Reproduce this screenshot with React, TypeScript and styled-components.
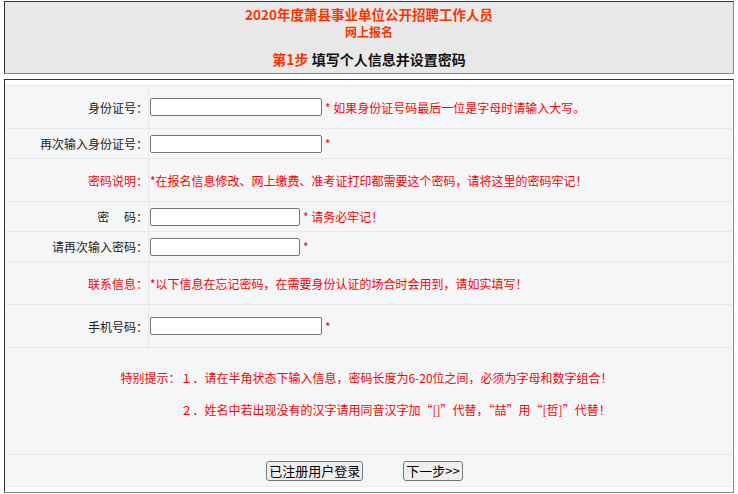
import styled, { createGlobalStyle } from "styled-components";

const GlobalStyle = createGlobalStyle`
  body {
    margin: 0;
    background: #fff;
    font-family: "Noto Sans CJK SC", "Liberation Sans", sans-serif;
    font-size: 12px;
    color: #333;
  }
`;

const Page = styled.div`
  padding: 1px 4px 0 4px;
  display: flex;
  flex-direction: column;
  gap: 5px;
`;

const Header = styled.header`
  height: 73px;
  background: #e8e8e8;
  border: 1px solid #888;
  border-top-color: #333;
  border-left-color: #333;
  display: flex;
  flex-direction: column;
  align-items: center;
  padding-top: 4px;
  box-sizing: border-box;
`;

const TitleLine = styled.div<{ $size: number }>`
  color: #ff3300;
  font-weight: bold;
  font-size: ${(p) => p.$size}px;
  line-height: 17px;
`;

const Step = styled.div`
  margin-top: 10px;
  font-size: 14px;
  font-weight: bold;
  line-height: 18px;
  color: #111;
  span {
    color: #ff3300;
  }
`;

const FormBox = styled.div`
  border: 1px solid #888;
  border-top-color: #333;
  border-left-color: #333;
  background: #fff;
  padding: 5px 1px 5px 0;
`;

const Row = styled.div<{ $h: number }>`
  display: grid;
  grid-template-columns: 144px 1fr;
  height: ${(p) => p.$h}px;
  background: #f5f6f8;
  border-top: 1px solid #e6e8eb;
  box-sizing: border-box;
`;

const Label = styled.div<{ $red?: boolean }>`
  display: flex;
  align-items: center;
  justify-content: flex-end;
  padding-right: 0;
  border-right: 1px solid #e6e8eb;
  color: ${(p) => (p.$red ? "#ff0000" : "#222")};
  white-space: pre;
`;

const Value = styled.div`
  display: flex;
  align-items: center;
  padding-left: 1px;
  gap: 3px;
  color: #ff0000;
`;

const Input = styled.input<{ $w: number }>`
  width: ${(p) => p.$w}px;
  height: 18px;
  box-sizing: border-box;
  border: 1px solid #767676;
  border-radius: 2px;
  background: #fff;
  padding: 0 2px;
  margin: 0;
`;

const Notes = styled.div`
  height: 107px;
  background: #f5f6f8;
  border-top: 1px solid #e6e8eb;
  box-sizing: border-box;
  display: flex;
  justify-content: center;
  padding-top: 21px;
  padding-right: 4px;
`;

const NoteGrid = styled.div`
  display: grid;
  grid-template-columns: auto auto;
  row-gap: 14px;
  color: #ff0000;
  line-height: 18px;
  align-content: start;
`;

const Buttons = styled.div`
  height: 33px;
  background: #f5f6f8;
  border-top: 1px solid #e6e8eb;
  border-bottom: 1px solid #e6e8eb;
  box-sizing: border-box;
  display: flex;
  justify-content: center;
  align-items: center;
  gap: 40px;
  padding-right: 8px;
`;

const Button = styled.button`
  font-family: "Noto Sans CJK SC", "Liberation Sans", sans-serif;
  font-size: 13px;
  line-height: 16px;
  height: 20px;
  padding: 0 2px;
  color: #000;
  background: #efefef;
  border: 1px solid #767676;
  border-radius: 3px;
  cursor: pointer;
`;

export default function App() {
  return (
    <>
      <GlobalStyle />
      <Page>
        <Header>
          <TitleLine $size={13.5}>2020年度萧县事业单位公开招聘工作人员</TitleLine>
          <TitleLine $size={12}>网上报名</TitleLine>
          <Step>
            <span>第1步</span> 填写个人信息并设置密码
          </Step>
        </Header>
        <FormBox>
          <Row $h={43}>
            <Label>身份证号：</Label>
            <Value>
              <Input $w={172} />
              <span>* 如果身份证号码最后一位是字母时请输入大写。</span>
            </Value>
          </Row>
          <Row $h={30}>
            <Label>再次输入身份证号：</Label>
            <Value>
              <Input $w={172} />
              <span>*</span>
            </Value>
          </Row>
          <Row $h={43}>
            <Label $red>密码说明：</Label>
            <Value>*在报名信息修改、网上缴费、准考证打印都需要这个密码，请将这里的密码牢记！</Value>
          </Row>
          <Row $h={30}>
            <Label>{"密\u3000\u00a0码："}</Label>
            <Value>
              <Input $w={150} type="password" />
              <span>* 请务必牢记！</span>
            </Value>
          </Row>
          <Row $h={30}>
            <Label>请再次输入密码：</Label>
            <Value>
              <Input $w={150} type="password" />
              <span>*</span>
            </Value>
          </Row>
          <Row $h={43}>
            <Label $red>联系信息：</Label>
            <Value>*以下信息在忘记密码，在需要身份认证的场合时会用到，请如实填写！</Value>
          </Row>
          <Row $h={43}>
            <Label>手机号码：</Label>
            <Value>
              <Input $w={172} />
              <span>*</span>
            </Value>
          </Row>
          <Notes>
            <NoteGrid>
              <span>特别提示：</span>
              <span>１．请在半角状态下输入信息，密码长度为6-20位之间，必须为字母和数字组合！</span>
              <span />
              <span>２．姓名中若出现没有的汉字请用同音汉字加“[]”代替，“喆”用“[哲]”代替！</span>
            </NoteGrid>
          </Notes>
          <Buttons>
            <Button type="button">已注册用户登录</Button>
            <Button type="button">下一步&gt;&gt;</Button>
          </Buttons>
        </FormBox>
      </Page>
    </>
  );
}
